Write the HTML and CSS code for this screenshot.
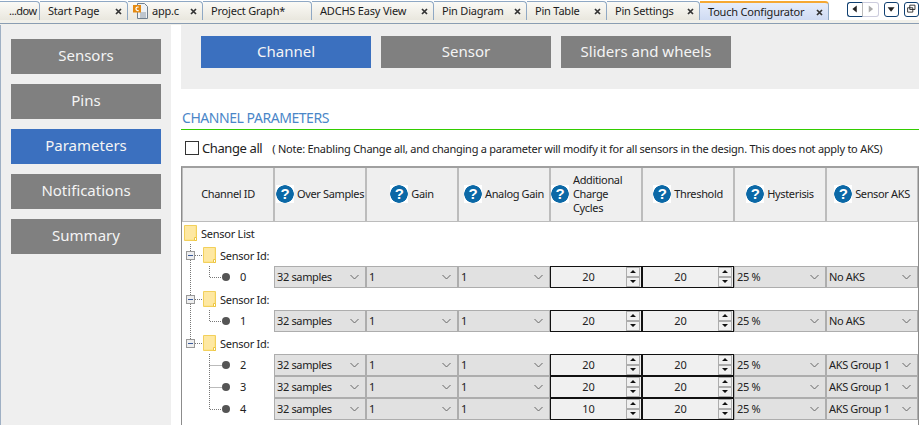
FILE: index.html
```html
<!DOCTYPE html>
<html lang="en">
<head>
<meta charset="utf-8">
<title>Touch Configurator</title>
<link rel="stylesheet" href="styles.css">
</head>
<body>
<svg class="defs" width="0" height="0" aria-hidden="true">
  <symbol id="x" viewBox="0 0 7 7"><path d="M1 1l5 5M6 1L1 6" stroke="#333" stroke-width="1.7" fill="none"/></symbol>
  <symbol id="chev" viewBox="0 0 9 6"><path d="M.5 1l4 4 4-4" stroke="#666" fill="none"/></symbol>
  <symbol id="spin" viewBox="0 0 14 20"><rect x=".5" y=".5" width="13" height="9" fill="#f0f0f0" stroke="#adadad"/><rect x=".5" y="10.5" width="13" height="9" fill="#f0f0f0" stroke="#adadad"/><path d="M7 3l3 3H4zM7 16l-3-3h6z" fill="#111"/></symbol>
  <symbol id="folder" viewBox="0 0 13 16"><path d="M.5.5h12v15H.5z" fill="#fde48f" stroke="#f2d05c"/><path d="M1 1h10v13H1z" fill="#fee8a2"/><path d="M10.5 12.5h2v3h-2z" fill="#fff" stroke="#eec640"/></symbol>
</svg>

<header class="tabstrip">
  <nav class="tabs">
    <div class="tab tab-clip">...dow</div>
    <div class="tab"><span>Start Page</span><svg class="close"><use href="#x"/></svg></div>
    <div class="tab tab-file">
      <svg class="file" viewBox="0 0 15 16"><path d="M4.5.5h7l3 3v12h-10z" fill="#eef1f4" stroke="#6f7f8f"/><path d="M7 10h6M7 12h6M7 14h6" stroke="#8e9aa6"/><rect y="2" width="8" height="7.5" fill="#e58a10"/><path d="M5.6 4.2A1.8 1.8 0 1 0 5.6 7.4" stroke="#fff" stroke-width="1.2" fill="none"/></svg>
      <span class="grow">app.c</span><svg class="close"><use href="#x"/></svg>
    </div>
    <div class="tab"><span>Project Graph*</span></div>
    <div class="tab"><span>ADCHS Easy View</span><svg class="close"><use href="#x"/></svg></div>
    <div class="tab"><span>Pin Diagram</span><svg class="close"><use href="#x"/></svg></div>
    <div class="tab"><span>Pin Table</span><svg class="close"><use href="#x"/></svg></div>
    <div class="tab"><span>Pin Settings</span><svg class="close"><use href="#x"/></svg></div>
    <div class="tab tab-active"><span>Touch Configurator</span><svg class="close"><use href="#x"/></svg></div>
  </nav>
  <div class="tabctl">
    <div class="ctl-pair">
      <svg class="ctl ctl-l" viewBox="0 0 16 15"><path d="M10 3v8L5 7z" fill="#222"/></svg>
      <svg class="ctl ctl-r" viewBox="0 0 16 15"><path d="M6 3v8l5-4z" fill="#aaa"/></svg>
    </div>
    <svg class="ctl ctl-one" viewBox="0 0 15 15"><path d="M3 5h8L7 10z" fill="#222"/></svg>
    <svg class="ctl ctl-one ctl-last" viewBox="0 0 15 15"><path d="M5.5 2.5h6v5h-6zM3 5.5h6v5H3z" fill="#fff" stroke="#222"/></svg>
  </div>
</header>
<div class="rule"></div>

<main class="main">
  <aside class="sidebar">
    <button class="side-btn">Sensors</button>
    <button class="side-btn">Pins</button>
    <button class="side-btn is-on">Parameters</button>
    <button class="side-btn">Notifications</button>
    <button class="side-btn">Summary</button>
  </aside>
  <section class="content">
    <div class="panel">
      <button class="top-btn is-on">Channel</button>
      <button class="top-btn">Sensor</button>
      <button class="top-btn">Sliders and wheels</button>
    </div>
    <h2 class="title">CHANNEL PARAMETERS</h2>
    <div class="options">
      <span class="check"></span>
      <span class="change">Change all</span>
      <span class="note">( Note: Enabling Change all, and changing a parameter will modify it for all sensors in the design. This does not apply to AKS)</span>
    </div>

    <div class="table">
      <div class="row head">
        <div class="th">Channel ID</div>
        <div class="th"><span class="help">?</span>Over Samples</div>
        <div class="th"><span class="help">?</span>Gain</div>
        <div class="th"><span class="help">?</span>Analog Gain</div>
        <div class="th th-left"><span class="help">?</span><span class="th-wrap">Additional Charge Cycles</span></div>
        <div class="th"><span class="help">?</span>Threshold</div>
        <div class="th"><span class="help">?</span>Hysterisis</div>
        <div class="th"><span class="help">?</span>Sensor AKS</div>
      </div>

      <div class="row tree-root"><svg class="ico-root"><use href="#folder"/></svg><span>Sensor List</span></div>

      <div class="row tree-group">
        <svg class="conn-g" viewBox="0 0 21 22"><path d="M8.5 0v7M8.5 16v6M13 11.5h7" class="dot"/><rect x="4.5" y="7.5" width="8" height="8" fill="#eee" stroke="#999"/><path d="M6 11.5h5" stroke="#3a5a9a"/></svg>
        <svg class="ico-group"><use href="#folder"/></svg><span>Sensor Id:</span>
      </div>
      <div class="row">
        <div class="tree-leaf"><svg class="conn" viewBox="0 0 48 22"><path d="M8.5 0v22M27.5 0v11.5H40" class="dot"/><circle cx="44" cy="11" r="4" fill="#555"/></svg><span>0</span></div>
        <div class="sel"><span>32 samples</span><svg class="chev"><use href="#chev"/></svg></div>
        <div class="sel"><span>1</span><svg class="chev"><use href="#chev"/></svg></div>
        <div class="sel"><span>1</span><svg class="chev"><use href="#chev"/></svg></div>
        <div class="num"><span>20</span><svg class="spin"><use href="#spin"/></svg></div>
        <div class="num"><span>20</span><svg class="spin"><use href="#spin"/></svg></div>
        <div class="sel"><span>25 %</span><svg class="chev"><use href="#chev"/></svg></div>
        <div class="sel"><span>No AKS</span><svg class="chev"><use href="#chev"/></svg></div>
      </div>

      <div class="row tree-group">
        <svg class="conn-g" viewBox="0 0 21 22"><path d="M8.5 0v7M8.5 16v6M13 11.5h7" class="dot"/><rect x="4.5" y="7.5" width="8" height="8" fill="#eee" stroke="#999"/><path d="M6 11.5h5" stroke="#3a5a9a"/></svg>
        <svg class="ico-group"><use href="#folder"/></svg><span>Sensor Id:</span>
      </div>
      <div class="row">
        <div class="tree-leaf"><svg class="conn" viewBox="0 0 48 22"><path d="M8.5 0v22M27.5 0v11.5H40" class="dot"/><circle cx="44" cy="11" r="4" fill="#555"/></svg><span>1</span></div>
        <div class="sel"><span>32 samples</span><svg class="chev"><use href="#chev"/></svg></div>
        <div class="sel"><span>1</span><svg class="chev"><use href="#chev"/></svg></div>
        <div class="sel"><span>1</span><svg class="chev"><use href="#chev"/></svg></div>
        <div class="num"><span>20</span><svg class="spin"><use href="#spin"/></svg></div>
        <div class="num"><span>20</span><svg class="spin"><use href="#spin"/></svg></div>
        <div class="sel"><span>25 %</span><svg class="chev"><use href="#chev"/></svg></div>
        <div class="sel"><span>No AKS</span><svg class="chev"><use href="#chev"/></svg></div>
      </div>

      <div class="row tree-group">
        <svg class="conn-g" viewBox="0 0 21 22"><path d="M8.5 0v7M13 11.5h7" class="dot"/><rect x="4.5" y="7.5" width="8" height="8" fill="#eee" stroke="#999"/><path d="M6 11.5h5" stroke="#3a5a9a"/></svg>
        <svg class="ico-group"><use href="#folder"/></svg><span>Sensor Id:</span>
      </div>
      <div class="row">
        <div class="tree-leaf"><svg class="conn" viewBox="0 0 48 22"><path d="M27.5 0v22M27.5 11.5H40" class="dot"/><circle cx="44" cy="11" r="4" fill="#555"/></svg><span>2</span></div>
        <div class="sel"><span>32 samples</span><svg class="chev"><use href="#chev"/></svg></div>
        <div class="sel"><span>1</span><svg class="chev"><use href="#chev"/></svg></div>
        <div class="sel"><span>1</span><svg class="chev"><use href="#chev"/></svg></div>
        <div class="num"><span>20</span><svg class="spin"><use href="#spin"/></svg></div>
        <div class="num"><span>20</span><svg class="spin"><use href="#spin"/></svg></div>
        <div class="sel"><span>25 %</span><svg class="chev"><use href="#chev"/></svg></div>
        <div class="sel"><span>AKS Group 1</span><svg class="chev"><use href="#chev"/></svg></div>
      </div>
      <div class="row">
        <div class="tree-leaf"><svg class="conn" viewBox="0 0 48 22"><path d="M27.5 0v22M27.5 11.5H40" class="dot"/><circle cx="44" cy="11" r="4" fill="#555"/></svg><span>3</span></div>
        <div class="sel"><span>32 samples</span><svg class="chev"><use href="#chev"/></svg></div>
        <div class="sel"><span>1</span><svg class="chev"><use href="#chev"/></svg></div>
        <div class="sel"><span>1</span><svg class="chev"><use href="#chev"/></svg></div>
        <div class="num"><span>20</span><svg class="spin"><use href="#spin"/></svg></div>
        <div class="num"><span>20</span><svg class="spin"><use href="#spin"/></svg></div>
        <div class="sel"><span>25 %</span><svg class="chev"><use href="#chev"/></svg></div>
        <div class="sel"><span>AKS Group 1</span><svg class="chev"><use href="#chev"/></svg></div>
      </div>
      <div class="row">
        <div class="tree-leaf"><svg class="conn" viewBox="0 0 48 22"><path d="M27.5 0v11.5H40" class="dot"/><circle cx="44" cy="11" r="4" fill="#555"/></svg><span>4</span></div>
        <div class="sel"><span>32 samples</span><svg class="chev"><use href="#chev"/></svg></div>
        <div class="sel"><span>1</span><svg class="chev"><use href="#chev"/></svg></div>
        <div class="sel"><span>1</span><svg class="chev"><use href="#chev"/></svg></div>
        <div class="num"><span>10</span><svg class="spin"><use href="#spin"/></svg></div>
        <div class="num"><span>20</span><svg class="spin"><use href="#spin"/></svg></div>
        <div class="sel"><span>25 %</span><svg class="chev"><use href="#chev"/></svg></div>
        <div class="sel"><span>AKS Group 1</span><svg class="chev"><use href="#chev"/></svg></div>
      </div>
    </div>
  </section>
</main>
</body>
</html>
```

FILE: styles.css
```css
* { box-sizing: border-box; }
html, body { margin: 0; height: 100%; }
body {
  width: 919px;
  height: 425px;
  overflow: hidden;
  background: #fff;
  color: #222;
  font-family: "Noto Sans", "Open Sans", sans-serif;
  font-size: 11px;
}
.defs { position: absolute; }

/* tab strip */
.tabstrip { display: flex; height: 20px; background: #fff; }
.tabs {
  display: grid;
  grid-template-columns: 40px 88px 75px 109px 122px 93px 80px 93px 129px;
  width: 829px;
  margin-top: 1px;
}
.tab {
  display: flex;
  align-items: center;
  justify-content: space-between;
  padding: 0 5px 1px 8px;
  border: 1px solid #8fa8c4;
  border-width: 1px 1px 0 0;
  border-top-right-radius: 4px;
  background: linear-gradient(#fbfaf6, #e9e7de);
  font-size: 11px;
  letter-spacing: -0.2px;
  color: #1c1c1c;
  white-space: nowrap;
}
.tab-clip { padding: 0 0 1px 9px; letter-spacing: -0.5px; }
.tab-file { padding-left: 5px; }
.tab-file .grow { flex: 1; margin-left: 4px; }
.tab-active {
  border-top: 2px solid #f5a833;
  background: linear-gradient(#e6edfb, #cfdbf3);
}
.file { width: 15px; height: 16px; }
.close { width: 7px; height: 7px; margin-top: 2px; }
.tabctl { display: flex; margin: 2px 0 0 18px; gap: 5px; }
.ctl-pair { display: flex; }
.ctl { display: block; width: 16px; height: 15px; }
.ctl-l { border: 1px solid #0f3f70; border-right-color: #bbb; border-radius: 3px 0 0 3px; background: #fff; }
.ctl-r { border: 1px solid #ccd; border-left: 0; border-radius: 0 3px 3px 0; background: #fff; }
.ctl-one { width: 15px; border: 1px solid #0f3f70; border-radius: 3px; background: #fff; }
.rule { height: 5px; padding-top: 3px; background: #f1f0ea; }
.rule::after { content: ""; display: block; height: 1px; background: #8a9db3; }

/* main */
.main { display: flex; height: 400px; }
.sidebar {
  flex: none;
  display: flex;
  flex-direction: column;
  gap: 10px;
  width: 171px;
  padding: 14px 10px 0 10px;
  background: #efefef;
  border-left: 1px solid #9fb0c4;
}
button { border: 0; padding: 0; color: #fff; font: inherit; }
.side-btn { flex: none; height: 35px; width: 150px; padding-bottom: 3px; background: #808080; font-size: 15px; color: #f4f4f4; }
.side-btn.is-on { background: #3b70bf; }
.content { flex: 1; padding-left: 10px; min-width: 0; }
.panel { display: flex; gap: 10px; height: 64px; padding: 11px 20px; background: #eee; }
.top-btn { width: 170px; height: 32px; padding-bottom: 2px; background: #808080; font-size: 15px; color: #f4f4f4; }
.top-btn.is-on { background: #3b70bf; }
.title {
  margin: 20px 0 0;
  height: 21px;
  padding: 0 0 3px 1px;
  border-bottom: 1px solid #33cc00;
  color: #4a86c8;
  font-size: 14px;
  font-weight: 400;
  line-height: 17px;
  letter-spacing: -0.45px;
}
.options { display: flex; align-items: center; height: 36px; padding-left: 4px; }
.check { flex: none; width: 14px; height: 14px; border: 1px solid #333; background: #fff; }
.change { flex: none; margin-left: 3px; font-size: 13px; letter-spacing: -0.4px; white-space: nowrap; }
.note { margin-left: 10px; font-size: 11px; letter-spacing: -0.25px; white-space: nowrap; }

/* table */
.table { height: 260px; border: 1px solid #8c8c8c; border-width: 1px 1px 0 1px; border-top: 2px solid #a0a0a0; }
.row { display: grid; grid-template-columns: repeat(8, 92px); height: 22px; }
.head { height: 54px; }
.th {
  display: flex;
  align-items: center;
  justify-content: center;
  gap: 3px;
  padding-bottom: 2px;
  background: #efefef;
  border-left: 1px solid #bcbcbc;
  border-right: 1px solid #bcbcbc;
  border-bottom: 1px solid #bcbcbc;
  font-size: 11px;
  letter-spacing: -0.35px;
  line-height: 14px;
  white-space: nowrap;
}
.th-left { justify-content: flex-start; gap: 4px; white-space: normal; }
.th-wrap { width: 50px; }
.help {
  flex: none;
  width: 18px;
  height: 18px;
  background: radial-gradient(circle closest-side, #0b68a6 94%, #fff 100%);
  color: #fff;
  font: 700 15px/18px "Liberation Sans", sans-serif;
  text-align: center;
}

.tree-root, .tree-group { display: flex; align-items: center; font-size: 11px; letter-spacing: -0.25px; }
.tree-root { padding-left: 2px; }
.tree-root span { margin-left: 4px; }
.ico-root, .ico-group { width: 13px; height: 16px; }
.conn-g { flex: none; width: 21px; height: 22px; }
.tree-group span { margin-left: 4px; }
.conn { display: block; flex: none; width: 48px; height: 22px; }
.dot { fill: none; stroke: #777; stroke-dasharray: 1 1; }
.tree-leaf { display: flex; align-items: center; font-size: 11px; }
.tree-leaf span { margin: 0 0 1px 10px; }

.sel {
  display: flex;
  align-items: center;
  justify-content: space-between;
  padding: 0 6px 1px 2px;
  background: #e1e1e1;
  border: 1px solid #adadad;
  font-size: 11px;
  letter-spacing: -0.35px;
  white-space: nowrap;
}
.chev { width: 9px; height: 6px; }
.num {
  display: flex;
  align-items: center;
  justify-content: space-between;
  padding-right: 1px;
  background: #f0f0f0;
  border: 1px solid #111;
  font-size: 11px;
}
.num span { flex: 1; margin-bottom: 1px; text-align: center; }
.spin { width: 14px; height: 20px; }
```
